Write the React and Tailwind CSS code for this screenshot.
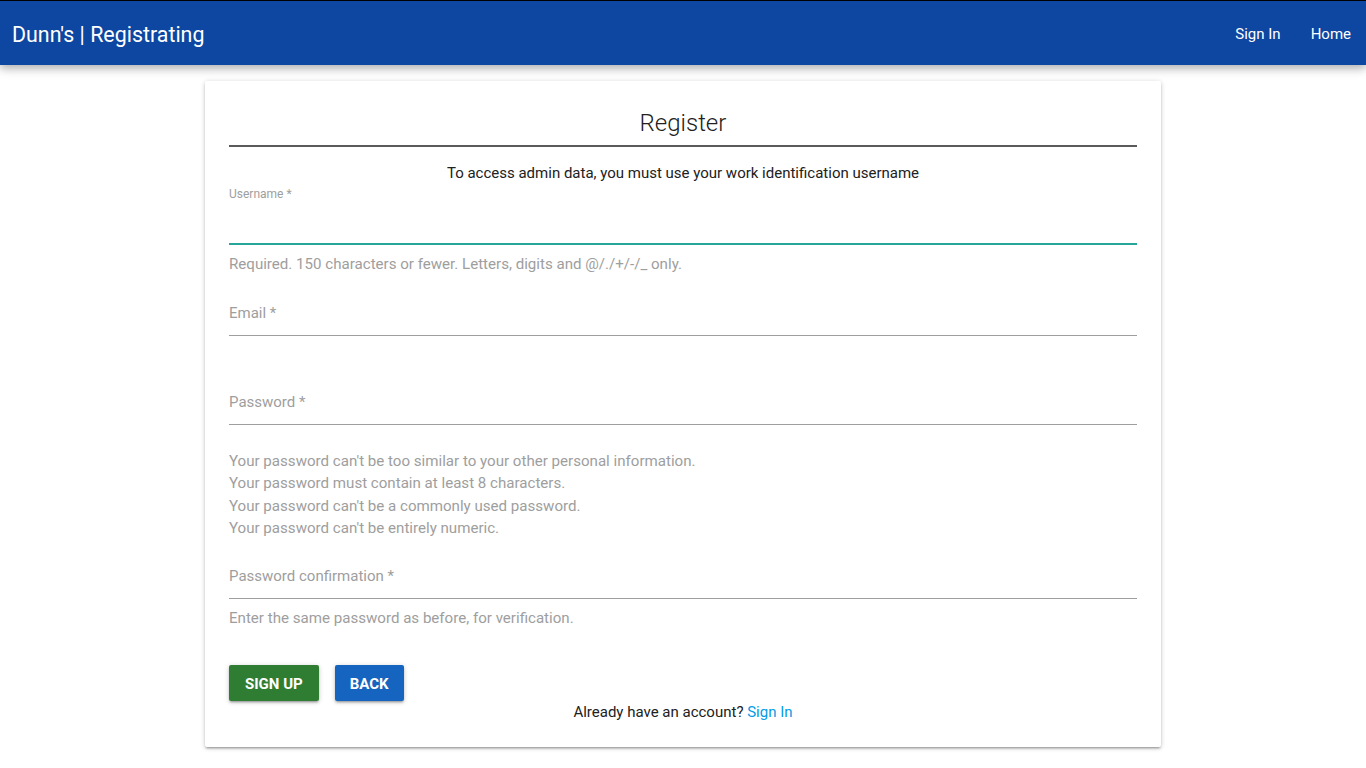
import React from "react";

function Field({ label, focused, helper }) {
  return (
    <div>
      <div className={focused ? "h-[43px] border-b-2 border-[#26a69a]" : "h-[44px] flex items-center border-b border-[#9e9e9e]"}>
        {!focused && <span className="text-[15px] text-[#9e9e9e]">{label}</span>}
      </div>
      {helper}
    </div>
  );
}

export default function App() {
  return (
    <div className="min-h-screen bg-white text-[#212121] font-['Roboto',sans-serif]">
      <nav className="h-[65px] pt-[3px] border-t border-black bg-[#0d47a1] text-white flex items-center justify-between shadow-[0_3px_8px_0_rgba(0,0,0,0.22),0_3px_12px_0_rgba(0,0,0,0.14)]">
        <a className="pl-3 text-[21.4px] leading-none">Dunn's | Registrating</a>
        <ul className="flex text-[15px]">
          <li className="px-[15px]">Sign In</li>
          <li className="px-[15px]">Home</li>
        </ul>
      </nav>

      <div className="w-[956px] mx-auto mt-[16px] bg-white p-6 rounded-[2px] shadow-[0_2px_2px_0_rgba(0,0,0,0.14),0_3px_1px_-2px_rgba(0,0,0,0.12),0_1px_5px_0_rgba(0,0,0,0.2)]">
        <h2 className="h-8 text-center text-[24px] font-light leading-[36px] text-[#212121]">Register</h2>
        <hr className="mt-2 border-0 h-[2px] bg-[#5a5a5a]" />
        <p className="mt-[15px] text-center text-[15px] leading-[22px] text-[#212121]">
          To access admin data, you must use your work identification username
        </p>

        <div className="mt-[2px]">
          <div className="h-4 text-[12px] leading-4 text-[#9e9e9e]">Username *</div>
          <Field focused />
          <p className="mt-[8px] text-[15.1px] leading-[22px] text-[#9e9e9e]">
            Required. 150 characters or fewer. Letters, digits and @/./+/-/_ only.
          </p>
        </div>

        <div className="mt-[17px]">
          <Field label="Email *" />
        </div>

        <div className="mt-[45px]">
          <Field label="Password *" />
          <ul className="mt-[25px] text-[15.1px] leading-[22.4px] text-[#9e9e9e]">
            <li>Your password can't be too similar to your other personal information.</li>
            <li>Your password must contain at least 8 characters.</li>
            <li>Your password can't be a commonly used password.</li>
            <li>Your password can't be entirely numeric.</li>
          </ul>
        </div>

        <div className="mt-[15px]">
          <Field label="Password confirmation *" />
          <p className="mt-[8px] text-[15.1px] leading-[22px] text-[#9e9e9e]">
            Enter the same password as before, for verification.
          </p>
        </div>

        <div className="mt-[36px] flex gap-4">
          <button className="h-9 pt-[3px] px-4 rounded-[2px] bg-[#2e7d32] text-white text-[15px] font-bold uppercase shadow-[0_2px_2px_0_rgba(0,0,0,0.14),0_3px_1px_-2px_rgba(0,0,0,0.12),0_1px_5px_0_rgba(0,0,0,0.2)]">
            Sign Up
          </button>
          <button className="h-9 pt-[3px] px-[15px] rounded-[2px] bg-[#1565c0] text-white text-[15px] font-bold uppercase shadow-[0_2px_2px_0_rgba(0,0,0,0.14),0_3px_1px_-2px_rgba(0,0,0,0.12),0_1px_5px_0_rgba(0,0,0,0.2)]">
            Back
          </button>
        </div>
        <p className="text-center text-[15px] leading-[22px] text-[#212121]">
          Already have an account? <a className="text-[#039be5]">Sign In</a>
        </p>
      </div>
    </div>
  );
}
